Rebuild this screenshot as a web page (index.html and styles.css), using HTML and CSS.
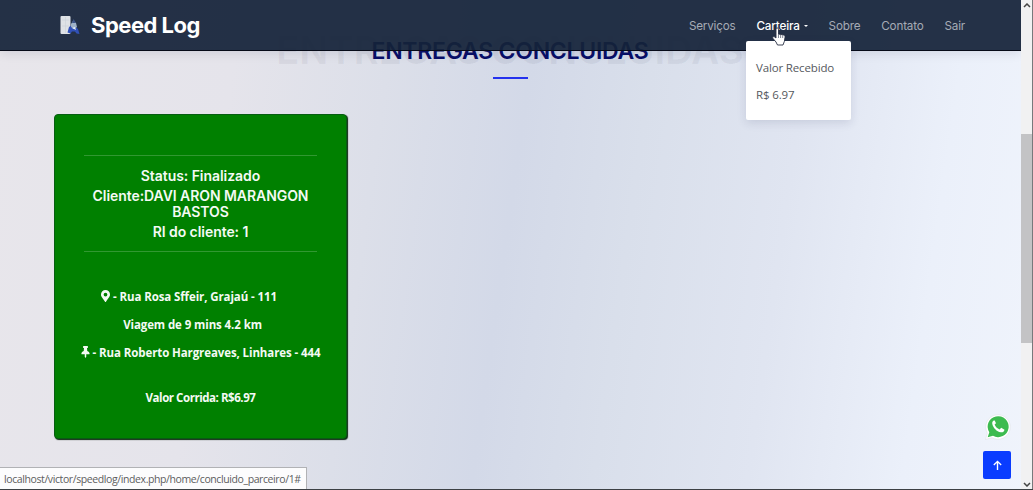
FILE: index.html
```html
<!DOCTYPE html>
<html lang="pt-BR">
<head>
<meta charset="utf-8">
<title>Speed Log</title>
<link rel="stylesheet" href="styles.css">
</head>
<body>
<div class="page">
  <main class="content">
    <div class="section-title">
      <span class="ghost">ENTREGAS CONCLUIDAS</span>
      <h2>ENTREGAS CONCLUIDAS</h2>
      <div class="underline"></div>
    </div>
    <article class="card">
      <div class="summary">
        <h4 class="status">Status: Finalizado</h4>
        <h4 class="client">Cliente:DAVI ARON MARANGON<br>BASTOS</h4>
        <h4 class="client-id">RI do cliente: 1</h4>
      </div>
      <div class="route">
        <p class="origin"><svg class="pin" viewBox="0 0 384 512"><path fill="currentColor" fill-rule="evenodd" d="M172 502C27 291 0 270 0 192a192 192 0 1 1 384 0c0 78-27 99-172 310a24 24 0 0 1-40 0zM192 272a80 80 0 1 0 0-160 80 80 0 0 0 0 160z"/></svg><span>- Rua Rosa Sffeir, Grajaú - 111</span></p>
        <p class="trip"><span>Viagem de 9 mins 4.2 km</span></p>
        <p class="destination"><svg class="pin" viewBox="0 0 384 512"><path fill="currentColor" d="M298 28c0-15-12-28-26-28H112C98 0 86 13 86 28v32c0 12 10 20 26 20h16l-11 130C60 230 16 275 16 328c0 13 11 24 24 24h120v104l24 50c3 8 13 8 16 0l24-50V352h120c13 0 24-11 24-24 0-53-44-98-101-118L256 80h16c16 0 26-8 26-20z"/></svg><span>- Rua Roberto Hargreaves, Linhares - 444</span></p>
        <p class="fare"><span>Valor Corrida: R$6.97</span></p>
      </div>
    </article>
  </main>

  <header class="navbar">
    <div class="brand">
      <svg class="logo" viewBox="0 0 20 20"><rect x="0.5" y="1" width="10" height="18" rx="1" fill="#dfe2e6"/><path d="M2 5h7M2 11h7M5.500 2v16" stroke="#cbd1d8" stroke-width=".6"/><path d="M9 12l3-2 3 1 3 3 1.500 5-3-.6-1.500-2-3 0-1.500 2-3-1z" fill="#3151b8"/><path d="M11 9l2-3 3 2 1 4-3 2-3-2z" fill="#9fb2c8"/><path d="M12 8l1.500-4L16 8z" fill="#3d5488"/><path d="M12 13l3-1 1 3z" fill="#eaf0f4"/></svg>
      <span class="brand-name">Speed Log</span>
    </div>
    <nav class="links">
      <a class="serv">Serviços</a>
      <a class="active">Carteira<i class="caret"></i></a>
      <a class="sobre">Sobre</a>
      <a class="contato">Contato</a>
      <a class="sair">Sair</a>
    </nav>
  </header>

  <div class="dropdown"><p>Valor Recebido</p><p class="amount">R$ 6.97</p></div>
  <svg class="cursor" viewBox="0 0 14 19"><path d="M4 10V2.200C4 .5 6.500.5 6.500 2.200V7l5 1c1.200.3 1.700 1 1.500 2.300l-.6 4L11 18H5.500L4 15 1 11.500C0 10 1.500 9 2.700 10L4 11z" fill="#fff" stroke="#283044" stroke-width=".9"/><path d="M6.500 7v4M8.600 8v3M10.700 8.300V11" stroke="#485064" stroke-width=".7"/></svg>

  <svg class="whatsapp" viewBox="0 0 28 28"><path d="M1.500 26.500L3.300 20A12.300 12.300 0 1 1 8 24.700z" fill="#fff" stroke="#dfe3e8" stroke-width=".6"/><path d="M3.700 24.300L5.300 19.300A10.500 10.500 0 1 1 9 22.800z" fill="#3dbb50"/><path d="M9.800 7.500c-1 .4-1.900 1.700-1.500 3.500.9 4 4.300 7.500 8.500 8.300 1.900.3 3.400-.7 3.700-2.600l-3.300-1.900-1.600 1.700c-2.400-.9-4.200-2.700-5-4.900l1.400-1.400-1.300-2.700z" fill="#fff"/></svg>
  <a class="to-top"><svg viewBox="0 0 12 12"><path d="M6 11V1.500M2 5.500l4-4 4 4" fill="none" stroke="#fff" stroke-width="1.500"/></svg></a>

  <div class="status-bar"><span>localhost/victor/speedlog/index.php/home/concluido_parceiro/1#</span></div>
  <div class="scrollbar">
    <svg viewBox="0 0 8 5"><path d="M1 4l3-3 3 3" fill="none" stroke="#444" stroke-width="1.500"/></svg>
    <div class="thumb"></div>
    <svg class="down" viewBox="0 0 8 5"><path d="M1 1l3 3 3-3" fill="none" stroke="#444" stroke-width="1.500"/></svg>
  </div>
</div>
</body>
</html>
```
FILE: styles.css
```css
* { box-sizing: border-box; }
body { margin: 0; }
h2, h4, p { margin: 0; }
.page {
  position: relative;
  width: 1033px;
  height: 490px;
  overflow: hidden;
  font-family: "Open Sans", sans-serif;
  background: linear-gradient(98deg, #e8e6eb 0%, #e5e4eb 22%, #dcdfe9 36%, #d3d9e8 49%, #d9dfeb 60%, #e0e5f1 74%, #ebf0fa 88%, #f0f4fc 100%);
  border-bottom: 1px solid #3c4044;
}
.content { width: 1020px; padding-top: 27px; }
.section-title {
  display: grid;
  justify-items: center;
  height: 87px;
  grid-template-rows: 48px 4px;
  font-family: Inter, sans-serif;
  white-space: nowrap;
}
.ghost, .section-title h2 { grid-area: 1 / 1; }
.ghost { font-size: 38px; font-weight: 700; line-height: 46px; color: rgba(50, 50, 80, .06); }
.section-title h2 { font-size: 23px; font-weight: 600; line-height: 48px; letter-spacing: -.25px; color: #080e68; }
.underline { width: 35px; height: 2px; margin-top: 2px; background: #2431ee; }

.card {
  width: 293px;
  height: 325px;
  margin-left: 54px;
  padding: 40px 29px 0;
  border-radius: 4px;
  border: 1px solid #075d12;
  background: #008000;
  box-shadow: 1px 1px 1px #0c270f;
  color: #f4faf4;
  text-align: center;
}
.summary {
  height: 97px;
  padding-top: 12px;
  border-top: 1px solid #319831;
  border-bottom: 1px solid #319831;
  font-family: Inter, sans-serif;
}
.summary h4 { font-size: 14px; font-weight: 600; line-height: 16px; letter-spacing: -.06px; margin-bottom: 4px; white-space: nowrap; }
.route { padding-top: 34px; margin: 0 -20px; font-size: 11.5px; font-weight: 700; letter-spacing: -.1px; }
.route p { display: flex; justify-content: center; align-items: center; height: 20px; margin-bottom: 8px; white-space: nowrap; }
.route .origin { padding-right: 23px; }
.route .trip { padding-right: 16px; }
.route .fare { margin-top: 25px; letter-spacing: -.45px; }
.pin { width: 9px; height: 12px; margin-right: 3px; }

.navbar {
  position: absolute;
  top: 0;
  left: 0;
  width: 1021px;
  height: 51px;
  display: flex;
  justify-content: space-between;
  padding: 0 56px 0 60px;
  background: rgba(20, 34, 57, .93);
  border-bottom: 1px solid #060a18;
  box-shadow: 0 2px 10px rgba(30, 40, 80, .12);
  font-family: Inter, sans-serif;
}
.brand { display: flex; align-items: center; gap: 11px; padding-bottom: 1px; }
.logo { width: 20px; height: 20px; }
.brand-name { font-size: 22px; font-weight: 700; letter-spacing: -.5px; color: #fff; }
.links { display: flex; align-items: center; gap: 21px; font-size: 11.7px; letter-spacing: -.2px; color: #a5abb5; padding-top: 1px; }
.active { display: flex; align-items: center; color: #fff; font-weight: 500; }
.caret { margin-left: 4px; border: 2.5px solid transparent; border-top-color: #fff; border-bottom: 0; }

.dropdown {
  position: absolute;
  left: 746px;
  top: 41px;
  width: 105px;
  height: 79px;
  padding: 18px 10px;
  border-radius: 2px;
  background: #fff;
  box-shadow: 0 3px 10px rgba(50, 60, 100, .14);
  color: #55585d;
  font-size: 11.5px;
  letter-spacing: -.15px;
  line-height: 18px;
  white-space: nowrap;
}
.amount { margin-top: 9px; }
.cursor { position: absolute; left: 772px; top: 27px; width: 14px; height: 19px; }
.whatsapp { position: absolute; left: 984px; top: 413px; width: 28px; height: 28px; }
.to-top {
  position: absolute;
  left: 983px;
  top: 451px;
  width: 28px;
  height: 28px;
  display: grid;
  place-items: center;
  border-radius: 2px;
  background: #0a3cff;
}
.to-top svg { width: 11px; height: 11px; }
.status-bar {
  position: absolute;
  left: 0;
  bottom: 0;
  width: 307px;
  height: 22px;
  padding-left: 4px;
  border: 1px solid #b1b2b5;
  border-left: 0;
  border-bottom: 0;
  background: #fcfcfd;
  color: #5d5d5d;
  font-size: 10.5px;
  letter-spacing: -.4px;
  line-height: 22px;
  white-space: nowrap;
}
.scrollbar {
  position: absolute;
  right: 0;
  top: 0;
  width: 12px;
  height: 489px;
  display: flex;
  flex-direction: column;
  align-items: center;
  padding: 3px 0 2px;
  background: #f1f1f2;
  border-right: 1px solid #77797c;
}
.scrollbar svg { width: 8px; height: 5px; }
.scrollbar .down { margin-top: auto; }
.thumb { width: 11px; height: 209px; margin-top: 126px; background: #c3c3c5; }
```
